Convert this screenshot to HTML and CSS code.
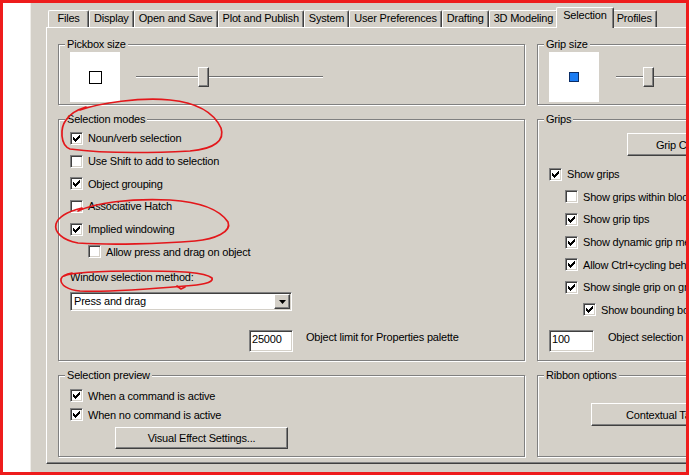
FILE: index.html
```html
<!DOCTYPE html>
<html>
<head>
<meta charset="utf-8">
<title>Options - Selection</title>
<link rel="stylesheet" href="styles.css">
</head>
<body>
<div class="frame">
  <div class="strip"></div>
  <div class="dialog">
    <div class="tabs">
      <div class="tab tab-first">Files</div>
      <div class="tab">Display</div>
      <div class="tab">Open and Save</div>
      <div class="tab">Plot and Publish</div>
      <div class="tab">System</div>
      <div class="tab">User Preferences</div>
      <div class="tab">Drafting</div>
      <div class="tab">3D Modeling</div>
      <div class="tab active">Selection</div>
      <div class="tab">Profiles</div>
    </div>
    <div class="panel">
      <div class="grid">
        <div class="group">
          <span class="legend">Pickbox size</span>
          <div class="size-row">
            <div class="preview"><span class="pickbox"></span></div>
            <div class="slider slider-pick"><span class="track seg-a"></span><span class="thumb"></span><span class="track seg-b"></span></div>
          </div>
        </div>
        <div class="group">
          <span class="legend">Grip size</span>
          <div class="size-row">
            <div class="preview"><span class="gripbox"></span></div>
            <div class="slider slider-grip"><span class="track seg-a"></span><span class="thumb"></span><span class="track seg-b"></span></div>
          </div>
        </div>

        <div class="group">
          <span class="legend">Selection modes</span>
          <div class="rows rows-sel">
            <div class="row"><span class="cb"><svg viewBox="1 1 11 11" width="11" height="11"><path d="M3 5H4V6H5V7H6V6H7V5H8V4H9V3H10V6H9V7H8V8H7V9H6V10H5V9H4V8H3Z"/></svg></span><span>Noun/verb selection</span></div>
            <div class="row"><span class="cb"></span><span>Use Shift to add to selection</span></div>
            <div class="row"><span class="cb"><svg viewBox="1 1 11 11" width="11" height="11"><path d="M3 5H4V6H5V7H6V6H7V5H8V4H9V3H10V6H9V7H8V8H7V9H6V10H5V9H4V8H3Z"/></svg></span><span>Object grouping</span></div>
            <div class="row"><span class="cb"></span><span>Associative Hatch</span></div>
            <div class="row"><span class="cb"><svg viewBox="1 1 11 11" width="11" height="11"><path d="M3 5H4V6H5V7H6V6H7V5H8V4H9V3H10V6H9V7H8V8H7V9H6V10H5V9H4V8H3Z"/></svg></span><span>Implied windowing</span></div>
            <div class="row indent-sel"><span class="cb"></span><span>Allow press and drag on object</span></div>
          </div>
          <span class="wsm-label">Window selection method:</span>
          <div class="combo">
            <span class="combo-text">Press and drag</span>
            <span class="combo-btn"><svg viewBox="0 0 7 4" width="7" height="4"><path d="M0 0H7L3.5 4Z"/></svg></span>
          </div>
          <div class="limit-row limit-props">
            <span class="field field-props">25000</span>
            <span class="limit-label">Object limit for Properties palette</span>
          </div>
        </div>

        <div class="group">
          <span class="legend">Grips</span>
          <div class="btn btn-gripcolors">Grip Colors...</div>
          <div class="rows rows-grip">
            <div class="row"><span class="cb"><svg viewBox="1 1 11 11" width="11" height="11"><path d="M3 5H4V6H5V7H6V6H7V5H8V4H9V3H10V6H9V7H8V8H7V9H6V10H5V9H4V8H3Z"/></svg></span><span>Show grips</span></div>
            <div class="row indent-a"><span class="cb"></span><span>Show grips within blocks</span></div>
            <div class="row indent-a"><span class="cb"><svg viewBox="1 1 11 11" width="11" height="11"><path d="M3 5H4V6H5V7H6V6H7V5H8V4H9V3H10V6H9V7H8V8H7V9H6V10H5V9H4V8H3Z"/></svg></span><span>Show grip tips</span></div>
            <div class="row indent-a"><span class="cb"><svg viewBox="1 1 11 11" width="11" height="11"><path d="M3 5H4V6H5V7H6V6H7V5H8V4H9V3H10V6H9V7H8V8H7V9H6V10H5V9H4V8H3Z"/></svg></span><span>Show dynamic grip menu</span></div>
            <div class="row indent-a"><span class="cb"><svg viewBox="1 1 11 11" width="11" height="11"><path d="M3 5H4V6H5V7H6V6H7V5H8V4H9V3H10V6H9V7H8V8H7V9H6V10H5V9H4V8H3Z"/></svg></span><span>Allow Ctrl+cycling behavior</span></div>
            <div class="row indent-a"><span class="cb"><svg viewBox="1 1 11 11" width="11" height="11"><path d="M3 5H4V6H5V7H6V6H7V5H8V4H9V3H10V6H9V7H8V8H7V9H6V10H5V9H4V8H3Z"/></svg></span><span>Show single grip on groups</span></div>
            <div class="row indent-b"><span class="cb"><svg viewBox="1 1 11 11" width="11" height="11"><path d="M3 5H4V6H5V7H6V6H7V5H8V4H9V3H10V6H9V7H8V8H7V9H6V10H5V9H4V8H3Z"/></svg></span><span>Show bounding box on groups</span></div>
          </div>
          <div class="limit-row limit-grips">
            <span class="field field-grips">100</span>
            <span class="limit-label">Object selection limit for display of grips</span>
          </div>
        </div>

        <div class="group">
          <span class="legend">Selection preview</span>
          <div class="rows rows-prev">
            <div class="row"><span class="cb"><svg viewBox="1 1 11 11" width="11" height="11"><path d="M3 5H4V6H5V7H6V6H7V5H8V4H9V3H10V6H9V7H8V8H7V9H6V10H5V9H4V8H3Z"/></svg></span><span>When a command is active</span></div>
            <div class="row"><span class="cb"><svg viewBox="1 1 11 11" width="11" height="11"><path d="M3 5H4V6H5V7H6V6H7V5H8V4H9V3H10V6H9V7H8V8H7V9H6V10H5V9H4V8H3Z"/></svg></span><span>When no command is active</span></div>
          </div>
          <div class="btn btn-visual">Visual Effect Settings...</div>
        </div>

        <div class="group">
          <span class="legend">Ribbon options</span>
          <div class="btn btn-ctx">Contextual Tab States...</div>
        </div>
      </div>
    </div>
  </div>
</div>

<svg class="marks" width="689" height="475" viewBox="0 0 689 475">
  <path d="M80 110 C100 103 140 97 170 100 C200 103 215 115 221 128 C225 140 215 149 190 151 C150 153 100 153 70 149 C60 145 60 128 66 120 C70 114 76 110 86 107"/>
  <path d="M78 211 C95 203 130 198 170 200 C200 202 220 210 228 222 C232 232 215 239 195 241 C160 244 110 245 78 243 C62 240 54 232 56 224 C58 217 66 212 82 208"/>
  <path d="M64 276 C72 272 100 271 140 271 C180 271 205 272 212 278 C214 283 200 285 185 286 C150 289 100 292 80 291 C68 290 60 285 61 279 C62 276 66 274 72 273"/>
  <path d="M177 286 L181 289 L185 287"/>
</svg>
</body>
</html>
```

FILE: styles.css
```css
* { box-sizing: border-box; }
html, body { margin: 0; padding: 0; }
body {
  width: 689px;
  height: 475px;
  overflow: hidden;
  position: relative;
  background: #fff;
  font-family: "Liberation Sans", Arial, sans-serif;
  font-size: 11px;
  letter-spacing: -0.2px;
  color: #000;
}
.frame {
  width: 689px;
  height: 475px;
  border: 3px solid #ee1c1c;
  display: flex;
  overflow: hidden;
}
.strip { width: 27px; flex: none; background: #fff; }
.dialog {
  flex: 1;
  min-width: 0;
  background: #d4d0c8;
  border-left: 1px solid #efede9;
  padding: 4px 0 0 15px;
  overflow: hidden;
}

/* tabs */
.tabs {
  display: flex;
  align-items: flex-start;
  height: 21px;
  margin-bottom: -1px;
  padding-left: 2px;
  white-space: nowrap;
}
.tab {
  height: 17px;
  margin-top: 3px;
  padding: 0 4px;
  line-height: 15px;
  border-left: 1px solid #fff;
  border-top: 1px solid #fff;
  border-right: 1px solid #404040;
  box-shadow: inset -1px 0 0 #808080;
  border-radius: 2px 2px 0 0;
  background: #d4d0c8;
  text-align: center;
}
.tab-first { width: 41px; }
.tab.active {
  position: relative;
  z-index: 1;
  height: 21px;
  margin: 0 -2px;
  padding: 0 6px;
  line-height: 15px;
}

/* panel */
.panel {
  width: 720px;
  border-top: 1px solid #fff;
  border-left: 1px solid #fff;
  border-right: 1px solid #404040;
  border-bottom: 1px solid #404040;
  box-shadow: inset -1px -1px 0 #808080;
  padding: 16px 0 6px 11px;
}
.grid {
  display: grid;
  grid-template-columns: 467px 240px;
  grid-template-rows: 61px 242px 82px;
  column-gap: 12px;
  row-gap: 14px;
}
.group {
  border: 1px solid #808080;
  box-shadow: inset 1px 1px 0 #fff, 1px 1px 0 #fff;
  display: flex;
  flex-direction: column;
  align-items: flex-start;
  padding: 0 11px;
  white-space: nowrap;
}
.legend {
  margin: -7px 0 0 -5px;
  padding: 0 2px;
  line-height: 13px;
  background: #d4d0c8;
}

/* size previews */
.size-row { display: flex; align-items: center; margin-top: 1px; }
.preview {
  width: 50px;
  height: 50px;
  background: #fff;
  display: flex;
  align-items: center;
  justify-content: center;
  flex: none;
}
.pickbox { width: 13px; height: 13px; border: 1px solid #000; }
.gripbox { width: 10px; height: 10px; border: 1px solid #0b2d66; background: #1b7cf3; }
.slider { display: flex; align-items: center; height: 20px; }
.slider-pick { width: 187px; margin-left: 16px; }
.slider-grip { width: 160px; margin-left: 17px; }
.track { height: 2px; border-top: 1px solid #707070; border-bottom: 1px solid #fff; }
.seg-b { flex: 1; }
.slider-pick .seg-a { width: 62px; }
.slider-grip .seg-a { width: 27px; }
.thumb {
  width: 11px;
  height: 20px;
  flex: none;
  border: 1px solid;
  border-color: #fff #404040 #404040 #fff;
  box-shadow: inset -1px -1px 0 #808080;
  background: #d4d0c8;
}

/* checkbox rows */
.row { display: flex; align-items: center; gap: 5px; }
.rows-sel { padding-top: 1px; }
.rows-sel .row { height: 22.7px; }
.rows-grip { margin-top: 7px; }
.rows-grip .row { height: 22.6px; }
.rows-prev { padding-top: 4px; }
.rows-prev .row { height: 19px; }
.indent-sel { padding-left: 18px; }
.indent-a { padding-left: 16px; }
.indent-b { padding-left: 34px; }
.cb {
  width: 13px;
  height: 13px;
  flex: none;
  display: flex;
  border: 1px solid;
  border-color: #808080 #fff #fff #808080;
  box-shadow: inset 1px 1px 0 #404040, inset -1px -1px 0 #d4d0c8;
  background: #fff;
}
.cb svg { display: block; fill: #000; }

/* combo */
.wsm-label { margin-top: 8px; line-height: 13px; }
.combo {
  margin-top: 8px;
  width: 222px;
  height: 19px;
  padding: 1px;
  display: flex;
  align-items: center;
  background: #fff;
  border: 1px solid;
  border-color: #808080 #fff #fff #808080;
  box-shadow: inset 1px 1px 0 #404040, inset -1px -1px 0 #d4d0c8;
}
.combo-text { flex: 1; padding-left: 2px; line-height: 13px; }
.combo-btn {
  width: 16px;
  height: 15px;
  display: flex;
  align-items: center;
  justify-content: center;
  background: #d4d0c8;
  border: 1px solid;
  border-color: #fff #404040 #404040 #fff;
  box-shadow: inset -1px -1px 0 #808080;
}
.combo-btn svg { display: block; fill: #000; }

/* limit fields */
.limit-row { display: flex; align-items: flex-start; }
.limit-props { margin: 19px 0 0 179px; gap: 13px; }
.limit-grips { margin-top: 9px; gap: 14px; }
.field {
  height: 22px;
  padding: 2px 0 0 2px;
  line-height: 13px;
  background: #fff;
  border: 1px solid;
  border-color: #808080 #fff #fff #808080;
  box-shadow: inset 1px 1px 0 #404040, inset -1px -1px 0 #d4d0c8;
}
.field-props { width: 44px; }
.field-grips { width: 45px; }
.limit-label { margin-top: 1px; line-height: 13px; }

/* buttons */
.btn {
  display: flex;
  align-items: center;
  justify-content: center;
  background: #d4d0c8;
  border: 1px solid;
  border-color: #fff #404040 #404040 #fff;
  box-shadow: inset -1px -1px 0 #808080;
}
.btn-gripcolors { margin: 7px 0 0 78px; width: 120px; height: 23px; }
.btn-visual { margin: 3px 0 0 45px; width: 173px; height: 22px; }
.btn-ctx { margin: 21px 0 0 42px; width: 182px; height: 23px; }

/* hand-drawn annotation marks */
.marks {
  position: absolute;
  left: 0;
  top: 0;
  pointer-events: none;
}
.marks path {
  fill: none;
  stroke: #e3171b;
  stroke-width: 1.7;
  stroke-linecap: round;
  stroke-linejoin: round;
}
```
